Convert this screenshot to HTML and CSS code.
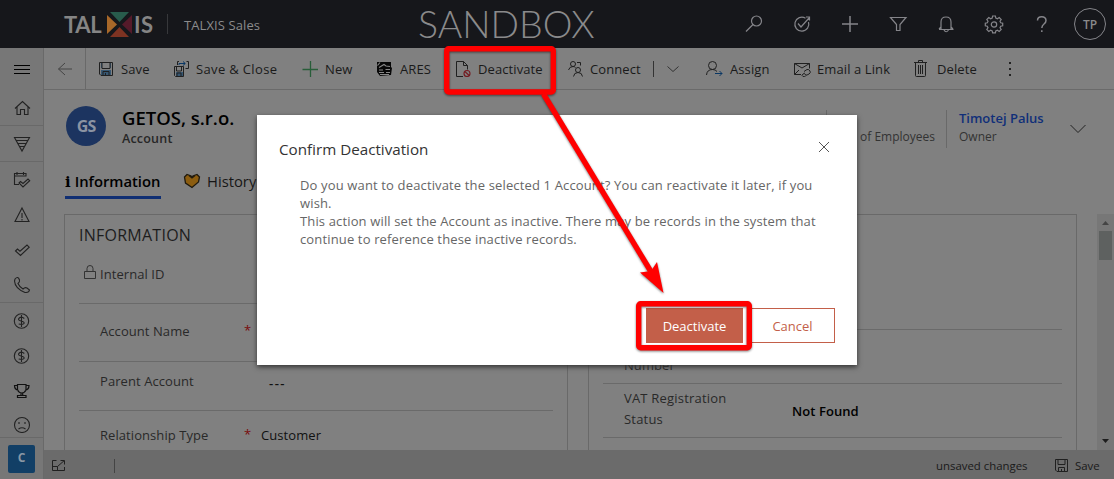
FILE: index.html
```html
<!DOCTYPE html>
<html lang="en">
<head>
<meta charset="utf-8">
<title>TALXIS Sales - Account</title>
<link rel="stylesheet" href="styles.css">
</head>
<body>
<div class="app">
<header class="topbar">
  <div class="logo"><span class="logo-a">TAL</span>
    <svg class="logo-x" width="25" height="25" viewBox="0 0 25 25"><path d="M3 0h19L12.500 10z" fill="#285c4c"/><path d="M0 3v19l10-9.500z" fill="#a86829"/><path d="M25 3v19l-10-9.500z" fill="#551a2a"/><path d="M3 25h19L12.500 15z" fill="#7e3322"/></svg>
    <span class="logo-b">IS</span></div>
  <span class="app-name">TALXIS Sales</span>
  <span class="env">SANDBOX</span>
  <nav class="tools">
    <svg width="20" height="20" viewBox="0 0 20 20"><circle cx="12.500" cy="7" r="5"/><path d="M9 10.500L2 17.500"/></svg>
    <svg width="20" height="20" viewBox="0 0 20 20"><path d="M13.500 4.200A7 7 0 1 0 16.500 8M6 9.500l3 3.500L17 4M14 3h3.500v3.500"/></svg>
    <svg width="20" height="20" viewBox="0 0 20 20"><path class="bold" d="M10 2v16M2 10h16"/></svg>
    <svg width="20" height="20" viewBox="0 0 20 20"><path d="M2.500 3.500h15.500l-6 7v6h-3.500v-6z"/></svg>
    <svg width="20" height="20" viewBox="0 0 20 20"><path d="M3 15.500h14.500M5 15V8q0-5 5-5t5 5v7M8 16q2 3.500 4.500 0M3 15l2-2M17 15l-2-2"/></svg>
    <svg width="20" height="20" viewBox="0 0 20 20"><path d="M8.600 2h2.800l.4 2 1.600.7L15.200 3.500l2 2-1.200 1.700.7 1.600 2 .4v2.600l-2 .4-.7 1.600 1.200 1.700-2 2-1.800-1.200-1.600.7-.4 1.900H8.600l-.4-1.900-1.600-.7-1.800 1.200-2-2L4 13.800l-.7-1.600-2-.4V9.200l2-.4L4 7.200 2.800 5.500l2-2 1.800 1.200L8.200 4z"/><circle cx="10" cy="10.500" r="2.700"/></svg>
    <svg width="20" height="20" viewBox="0 0 20 20"><path class="bold" d="M5.500 6.500Q5.500 2.700 9.700 2.700T14 6.500Q14 8.500 12 10T9.800 14M9.800 16.300v1.700"/></svg>
  </nav>
  <span class="user">TP</span>
</header>
<div class="body">
  <aside class="rail">
    <div class="cell menu"><svg width="20" height="20" viewBox="0 0 20 20"><path class="dark" d="M2 5.500h16M2 9.500h16M2 13.500h16"/></svg></div>
    <div class="cell home"><svg width="20" height="20" viewBox="0 0 20 20"><path d="M3 10.500l7.500-7 7.500 7M5 9v7.500h3.500v-5h4v5H16V9"/></svg></div>
    <div class="cell funnel"><svg width="20" height="20" viewBox="0 0 20 20"><path d="M2.500 3.500h15L10 17zM4 6.500h12M6 9.500h8M8 12.500h4"/></svg></div>
    <div class="cell"><svg width="20" height="20" viewBox="0 0 20 20"><path d="M7 14.500H2.500v-11H14v3M2.500 6H14M5 2v3M11.500 2v3M7 13l1.500-1.500 2.500 2 5-4.500 1.700 1.700-6.700 6.300z"/></svg></div>
    <div class="cell"><svg width="20" height="20" viewBox="0 0 20 20"><path d="M10 3l7 13.500H3zM10 8v5M10 14v1.500"/></svg></div>
    <div class="cell"><svg width="20" height="20" viewBox="0 0 20 20"><path d="M3.500 11l2-2 2.500 2.200L15 5l2.200 2.200L8.500 15.500z"/></svg></div>
    <div class="cell last"><svg width="20" height="20" viewBox="0 0 20 20"><path d="M3 4Q6 .5 7.500 5q.5 2-1.500 3.500 1.500 3.500 5 5.500 2-2 4-1l2.500 2Q17 18 13 17.500 3 13.500 2.500 6z"/></svg></div>
    <div class="cell"><svg width="20" height="20" viewBox="0 0 20 20"><circle cx="9.500" cy="10" r="7.200"/><path d="M12.300 7.500Q9.500 5 7.300 7t1.700 3 3 2.500T6.700 13M9.500 4v12"/></svg></div>
    <div class="cell"><svg width="20" height="20" viewBox="0 0 20 20"><circle cx="9.500" cy="10" r="7.200"/><path d="M12.300 7.500Q9.500 5 7.300 7t1.700 3 3 2.500T6.700 13M9.500 4v12"/></svg></div>
    <div class="cell"><svg width="20" height="20" viewBox="0 0 20 20"><path class="trophy" d="M5.500 3.500h8.500V9q-1.500 3-4.200 3T5.500 9zM5.500 4.500h-3q0 4 4 5M14 4.500h3q0 4-4 5M9 12v2.500M10.700 12v2.500M5.500 16.500v-2H14v2z"/></svg></div>
    <div class="cell sad"><svg width="20" height="20" viewBox="0 0 20 20"><circle cx="10" cy="12" r="7.500"/><path class="bold" d="M7 9.200v1.600M13 9.200v1.600"/><path d="M6.500 16q3.500-2.500 7 0"/></svg></div>
    <div class="area"><span>C</span></div>
  </aside>
  <main class="main">
    <div class="commands">
      <div class="back"><svg width="16" height="16" viewBox="0 0 16 16"><path d="M15 8H1.500M8 2L1.500 8 8 14"/></svg></div>
      <div class="cmd save"><svg width="16" height="16" viewBox="0 0 16 16"><path class="tint" d="M3 9h10v5H3zM3 2h1v5H3zM12 2h1v5h-1z"/><path d="M1.500 1.500h13v13H3L1.500 13zM4 1.500v6h8v-6M5 14.500v-4h6v4M7.500 14v-2"/></svg>Save</div>
      <div class="cmd save-close"><svg width="16" height="16" viewBox="0 0 16 16"><path class="tint" d="M2 11h7v4H2z"/><path d="M.5 5.500h9v10H1.500l-1-1zM2.500 6v4h5V6M3 15v-3h4v3M3.500 4V.5H5M12.500.5h2v7h-3"/><path class="blue" d="M5 4V2.500h6M9 .5l2.300 2L9 4.500"/></svg>Save &amp; Close</div>
      <div class="cmd new"><svg width="16" height="16" viewBox="0 0 16 16"><path class="green" d="M8.500 0v16M.5 8.500h16"/></svg>New</div>
      <div class="cmd ares"><svg width="16" height="16" viewBox="0 0 16 16"><path class="ink" d="M1 1h14v5l1 1-1 7-11 1-3-4z"/><path class="pale" d="M1.500 4.500L4 1.500M3 6.500l5-3 2 1.500 4 .5M3 9h4M9.500 8.500H14M3 11.500h5M10 11.500h4M4 13.500h9"/></svg>ARES</div>
      <div class="cmd deact"><svg width="16" height="16" viewBox="0 0 16 16"><path d="M8 15.500H1.500V.500h7l4 4v4M8.500.5v4h4"/><circle class="red" cx="12" cy="12.500" r="3"/><path class="red" d="M9.900 10.500l4.200 4"/></svg>Deactivate</div>
      <div class="cmd connect"><svg width="16" height="16" viewBox="0 0 16 16"><circle cx="5" cy="3" r="2.500"/><circle cx="10" cy="9" r="2.500"/><path d="M.5 9q1-3.500 4.500-3.500 1.500 0 2.500 1M5.500 15.500q.5-4 4.500-4t4.500 4M9 1.500h3.500v3"/></svg>Connect</div>
      <div class="split"><svg width="14" height="14" viewBox="0 0 14 14"><path d="M1.500 4.500l5.500 5 5.500-5"/></svg></div>
      <div class="cmd assign"><svg width="17" height="16" viewBox="0 0 17 16"><circle cx="6.500" cy="4.500" r="4"/><path d="M.5 14q.5-5.500 6-5.500 3 0 4.500 2"/><path class="blue" d="M9 12.500h7M13.500 10L16 12.500l-2.500 2.500"/></svg>Assign</div>
      <div class="cmd email"><svg width="17" height="16" viewBox="0 0 17 16"><path d="M7 13.500H.5v-11h15v5M.5 2.500L8 7l7.500-4.500M.5 13.500L5 9"/><path d="M10 10.500l3-2q2-.5 3 1.500t-1 3l-2 1q-2 .5-2-1M11 12l-2 1q-2 1.500 0 2.500t3-1"/></svg>Email a Link</div>
      <div class="cmd delete"><svg width="14" height="17" viewBox="0 0 14 17"><path d="M0 2.500h13M4.500 2V.5h4V2M1.500 2.500v13q0 1 1 1h8q1 0 1-1v-13M4.500 5v9M6.500 5v9M8.500 5v9"/></svg>Delete</div>
      <div class="more"><i></i><i></i><i></i></div>
    </div>
    <div class="content">
      <div class="record">
        <span class="avatar">GS</span>
        <div class="names"><b class="title">GETOS, s.r.o.</b><b class="kind">Account</b></div>
        <div class="employees"><span>No. of Employees</span></div>
        <div class="owner"><b>Timotej Palus</b><span>Owner</span></div>
        <svg class="expand" width="18" height="12" viewBox="0 0 18 12"><path d="M1.500 2L9 9.500 16.500 2"/></svg>
      </div>
      <div class="tabs">
        <span class="tab active"><i>i</i> Information</span>
        <span class="tab"><svg width="18" height="16" viewBox="0 0 18 16"><path class="heart" d="M1.500 4L4 1.500l3 1 2 1 2-1 3-1L16.500 4l-1 5L9 14.500 2.500 10z"/><path class="grip" d="M6 2.500l3 2.500 3-2.500"/></svg>History</span>
      </div>
      <div class="form">
        <section class="panel left">
          <h2>INFORMATION</h2>
          <div class="row internal"><svg width="12" height="16" viewBox="0 0 12 16"><path d="M.5 6.500h11v7H.5zM3 6V3.500q0-3 3-3t3 3V6"/></svg><span>Internal ID</span></div>
          <div class="row account"><span class="label">Account Name</span><em>*</em></div>
          <div class="row parent"><span class="label">Parent Account</span><span class="value dash">---</span></div>
          <div class="row relation"><span class="label">Relationship Type</span><em>*</em><span class="value">Customer</span></div>
        </section>
        <section class="panel right">
          <div class="row blank"></div>
          <div class="row number"><span class="label">VAT Number</span></div>
          <div class="row vat"><span class="label">VAT Registration Status</span><b>Not Found</b></div>
        </section>
        <div class="scroll"><svg width="7" height="4" viewBox="0 0 7 4"><path d="M0 4L3.500 0 7 4z" fill="#444"/></svg><i></i><svg class="down" width="7" height="4" viewBox="0 0 7 4"><path d="M0 0h7L3.500 4z" fill="#1d1d1d"/></svg></div>
      </div>
    </div>
    <footer class="status">
      <svg width="14" height="12" viewBox="0 0 14 12"><path d="M4.500.5h-4v10h12V7M.5 6.500h5v4M5.500 6.500L12 .8M8.500.5h4v4"/></svg>
      <i></i><span class="unsaved">unsaved changes</span>
      <svg width="13" height="13" viewBox="0 0 13 13"><path d="M.5.5h12v12H2L.500 11zM3 .5v5h7v-5M3.500 12.500V8.500h6v4M6.500 12v-2"/></svg><span class="foot-save">Save</span>
    </footer>
  </main>
</div>
<div class="dialog" role="dialog">
  <div class="dialog-head"><h1>Confirm Deactivation</h1><svg width="12" height="12" viewBox="0 0 12 12"><path d="M1 1l10 10M11 1L1 11"/></svg></div>
  <p>Do you want to deactivate the selected 1 Account? You can reactivate it later, if you<br>wish.<br>This action will set the Account as inactive. There may be records in the system that<br>continue to reference these inactive records.</p>
  <div class="actions"><button class="primary">Deactivate</button><button class="secondary">Cancel</button></div>
</div>
<svg class="marks" width="1114" height="479" viewBox="0 0 1114 479"><rect x="446.700" y="48.700" width="106.600" height="43.300" rx="2"/><rect x="638.700" y="303.700" width="110.600" height="44" rx="2"/><path d="M543.500 94L653 275"/><path class="head" d="M663.500 293L640 272.500 651 271 657 262z"/></svg>
</div>
</body>
</html>
```
FILE: styles.css
```css
* { box-sizing: border-box; }
body { margin: 0; font-family: "Open Sans", "Noto Sans", sans-serif; font-size: 13px; color: #1a1a1a; }
svg { display: block; flex: none; fill: none; stroke: #202020; stroke-width: 1; }
svg [fill] { stroke: none; }
i, em { font-style: normal; }
.app { position: relative; width: 1114px; height: 479px; overflow: hidden; background: #808080; display: flex; flex-direction: column; }

.topbar { height: 48px; flex: none; display: flex; align-items: center; background: #16171b; color: #8a8a8b; }
.logo { display: flex; align-items: center; width: 103px; margin-left: 64px; height: 33px; font-family: Lato, sans-serif; font-weight: bold; font-size: 22px; color: #858585; }
.logo-a { width: 43px; letter-spacing: -.3px; }
.logo-b { margin-left: 2px; letter-spacing: .5px; }
.app-name { width: 251px; height: 20px; line-height: 23px; border-left: 1px solid #37383b; padding-left: 16px; font-size: 13px; letter-spacing: .1px; color: #8b8b8c; white-space: nowrap; }
.env { width: 326px; font-family: Lato, "Open Sans", sans-serif; font-size: 37.500px; font-weight: 300; line-height: 46px; }
.tools { display: flex; gap: 28px; }
.tools svg { stroke: #85858a; stroke-width: 1.200; }
.bold { stroke-width: 1.500; }
.user { width: 32px; height: 32px; margin-left: 22px; border: 1px solid #85858a; border-radius: 50%; text-align: center; line-height: 32px; font-size: 12px; font-weight: 600; }

.body { display: flex; flex: 1; min-height: 0; }
.rail { width: 44px; flex: none; background: #777; border-right: 1px solid #696969; }
.cell { height: 35px; display: flex; align-items: center; justify-content: center; }
.cell svg { stroke: #222; stroke-width: 1.100; }
.cell .dark { stroke: #000; stroke-width: 1.200; }
.cell .trophy { stroke: #111; stroke-width: 1.200; }
.menu { height: 42px; padding-top: 1px; }
.home { height: 36px; border-bottom: 1px solid #696969; }
.funnel { height: 36px; border-bottom: 1px solid #696969; }
.last { height: 36px; border-bottom: 1px solid #696969; }
.sad { height: 30px; overflow: hidden; border-bottom: 1px solid #696969; }
.area { padding: 7px 8px; }
.area span { display: block; width: 27px; height: 28px; border-radius: 2px; background: #123f66; color: #8997a4; text-align: center; line-height: 26px; font-size: 12px; font-weight: bold; }

.main { flex: 1; min-width: 0; display: flex; flex-direction: column; }
.commands { height: 42px; flex: none; display: flex; align-items: center; border-bottom: 1px solid #6a6a6a; white-space: nowrap; letter-spacing: .1px; }
.back { width: 42px; height: 41px; border-right: 1px solid #696969; display: flex; align-items: center; justify-content: center; }
.back svg { stroke: #444; }
.cmd { display: flex; align-items: center; gap: 7px; }
.save { width: 76px; margin-left: 12px; }
.save-close { width: 128px; gap: 6px; letter-spacing: .35px; }
.new { width: 74px; }
.ares { width: 79px; gap: 8px; }
.deact { width: 113px; gap: 7px; }
.connect { width: 85px; gap: 6px; }
.split { width: 53px; height: 16px; padding: 1px 0 0 12px; border-left: 1px solid #333; }
.split svg { stroke: #333; }
.assign { width: 88px; }
.email { width: 120px; gap: 6px; }
.delete { width: 95px; gap: 9px; }
.tint { fill: #375772; stroke: none; }
.blue { stroke: #0a3764; }
.green { stroke: #285d39; stroke-width: 1.300; }
.red { stroke: #741a20; stroke-width: 1.100; }
.ink { fill: #080808; stroke: none; }
.pale { stroke: #888; stroke-width: 1.100; }
.more { display: flex; flex-direction: column; gap: 4px; }
.more i { width: 2px; height: 2px; background: #222; }

.content { flex: 1; min-height: 0; display: flex; flex-direction: column; }
.record { display: flex; height: 76px; padding: 16px 0 0 22px; white-space: nowrap; }
.avatar { width: 40px; height: 40px; border-radius: 50%; background: #1c3460; color: #8b93a2; text-align: center; font-size: 16px; font-weight: bold; line-height: 40px; letter-spacing: -1px; }
.names { display: flex; flex-direction: column; width: 720px; padding-left: 16px; }
.title { font-size: 18.500px; font-weight: 600; line-height: 23px; color: #000; }
.kind { font-size: 12.500px; font-weight: 600; line-height: 20px; letter-spacing: .2px; color: #272727; }
.employees { width: 121px; height: 38px; margin-top: 4px; padding: 17px 11px 0 0; border-left: 1px solid #696969; border-right: 1px solid #696969; display: flex; justify-content: flex-end; font-size: 12px; line-height: 19px; color: #333; }
.owner { display: flex; flex-direction: column; width: 122px; padding: 4px 0 0 12px; }
.owner b { font-weight: 600; color: #102f79; font-size: 13px; line-height: 17px; }
.owner span { font-size: 12px; line-height: 19px; color: #333; }
.expand { margin-top: 17px; stroke: #222; }
.tabs { display: flex; height: 48px; padding-left: 21px; white-space: nowrap; }
.tab { height: 33px; display: flex; align-items: center; gap: 6px; color: #171717; font-size: 14.800px; padding-bottom: 3px; }
.active { width: 96px; margin-right: 22px; gap: 4px; border-bottom: 3px solid #102f73; padding-bottom: 0; font-weight: 600; color: #000; }
.active i { font-family: "DejaVu Serif", serif; font-weight: bold; }
.heart { fill: #8c5d10; stroke: #201a0e; stroke-width: 1.300; }
.grip { stroke: #201a0e; stroke-width: 1.300; }
.form { flex: 1; min-height: 0; display: flex; overflow: hidden; padding-left: 20px; }
.panel { height: 300px; flex: none; border: 1px solid #696969; padding: 0 14px; }
.left { width: 504px; }
.right { width: 489px; margin-left: 20px; }
h2 { margin: 8px 0 0; font-size: 16px; font-weight: 400; line-height: 24px; color: #1d1d1d; letter-spacing: .25px; }
.row { display: flex; border-bottom: 1px solid #6a6a6a; color: #292929; letter-spacing: .07px; }
.internal { height: 57px; padding: 18px 0 0 5px; gap: 4px; line-height: 18px; }
.internal svg { stroke: #333; }
.row .label { width: 145px; padding-left: 21px; flex: none; }
.row em { width: 17px; color: #790c0c; line-height: 18px; }
.account { height: 58px; padding-top: 17px; line-height: 20px; }
.parent { height: 49px; padding-top: 9px; line-height: 20px; }
.relation { height: 54px; padding-top: 14px; line-height: 20px; }
.value { color: #111; }
.dash { margin-left: 45px; font-weight: 600; letter-spacing: 1.500px; line-height: 24px; }
.account em, .relation em { width: 17px; margin-left: 20px; }
.blank { height: 115px; }
.number { height: 54px; padding-top: 4px; line-height: 21px; }
.number .label { width: 90px; }
.vat { height: 54px; padding-top: 4px; line-height: 21px; }
.vat .label { width: 189px; padding-right: 50px; letter-spacing: .2px; }
.vat b { padding-top: 13px; font-weight: 600; color: #000; }
.scroll { width: 17px; height: 236px; margin-left: 20px; background: #777; display: flex; flex-direction: column; align-items: center; padding: 7px 0; }
.scroll i { width: 13px; height: 29px; margin-top: 6px; background: #5e6160; }
.scroll .down { margin-top: auto; }
.status { height: 29px; flex: none; display: flex; align-items: center; background: #6b6b6b; padding: 2px 0 0 8px; font-size: 11.400px; white-space: nowrap; }
.status i { width: 1px; height: 14px; margin-left: 48px; background: #444; }
.unsaved { width: 119px; margin-left: 821px; }
.foot-save { margin-left: 7px; }

.dialog { position: absolute; left: 257px; top: 115px; width: 600px; height: 250px; background: #fff; box-shadow: 0 2px 5px #333; }
.dialog-head { display: flex; justify-content: space-between; padding: 23px 27px 0 22px; }
.dialog-head svg { margin-top: 3px; stroke: #555; }
h1 { margin: 0; font-size: 15.200px; line-height: 22px; font-weight: 400; color: #333; white-space: nowrap; }
.dialog p { margin: 16px 0 0 43px; font-size: 13px; line-height: 18px; letter-spacing: .145px; color: #666; white-space: nowrap; }
.actions { display: flex; justify-content: flex-end; padding: 60px 22px 0 0; }
.actions button { height: 35px; padding: 0; font: 13px "Open Sans", "Noto Sans", sans-serif; border: 1px solid #c35f49; }
.primary { width: 97px; background: #c35f49; color: #fff; margin-right: 7px; }
.secondary { width: 85px; background: #fff; color: #c35f49; }
.marks { position: absolute; left: 0; top: 0; stroke: #f00; stroke-width: 5.400; pointer-events: none; filter: drop-shadow(0 1px 1px rgba(0,0,0,.5)); }
.head { fill: #f00; stroke: none; }
```
